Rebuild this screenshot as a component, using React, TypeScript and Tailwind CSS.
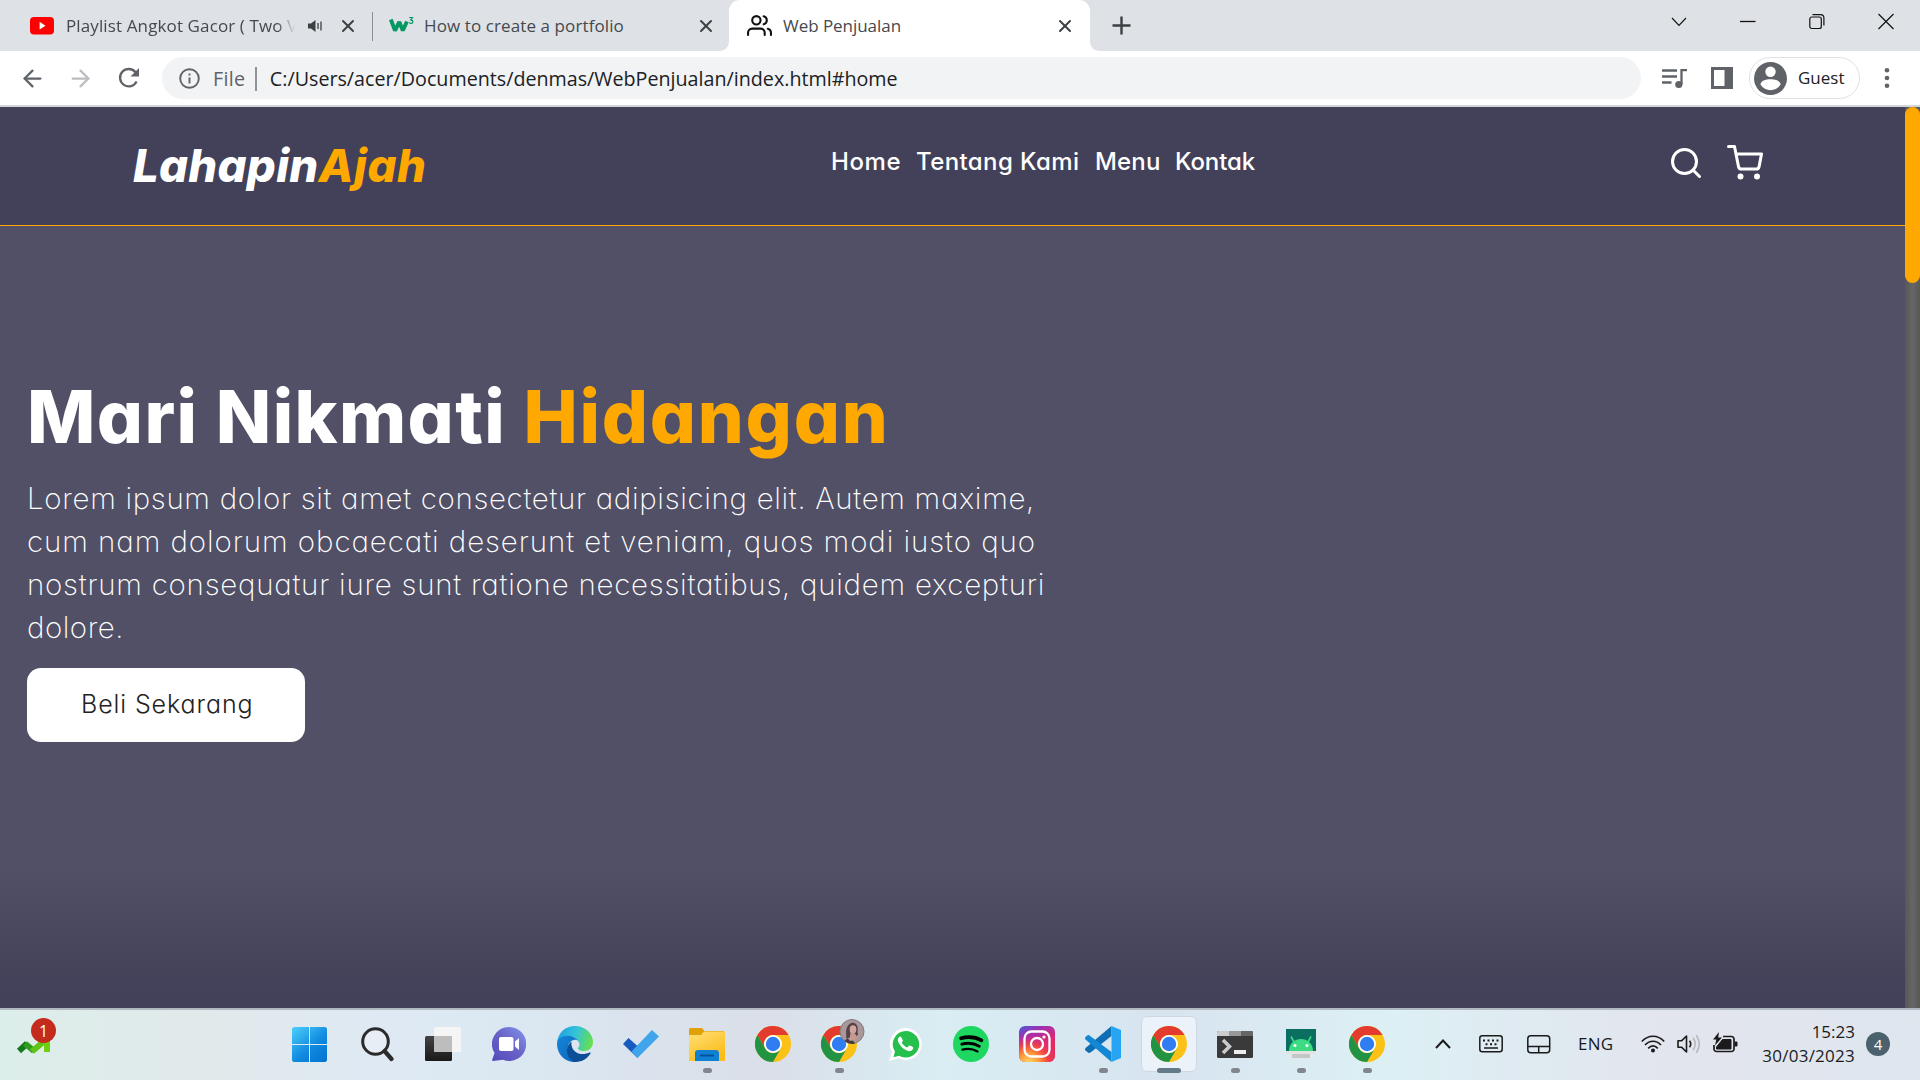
import type { ReactNode } from "react";
import { ArrowLeft, ArrowRight, X } from "lucide-react";

function YouTube() {
  return (
    <svg width="24" height="18" viewBox="0 0 24 18">
      <rect y="0" width="24" height="17.500" rx="4" fill="#f00" />
      <path d="M9.600 4.800 15.500 8.700l-5.900 3.700z" fill="#fff" />
    </svg>
  );
}

function Speaker() {
  return (
    <svg width="16" height="14" viewBox="0 0 16 14" fill="none" stroke="#3c4043" strokeWidth="1.300">
      <path d="M0 4.500h3L7.500 1v12L3 9.500H0z" fill="#3c4043" stroke="none" />
      <path d="M10 4v6M13 2.500v9" />
    </svg>
  );
}

function W3Logo() {
  return (
    <svg width="25" height="20" viewBox="0 0 25 20" fill="none" stroke="#059862">
      <path d="m1.800 3.500 4.200 11L10.300 6l3.500 8.500 4.200-9" strokeWidth="3.900" strokeLinejoin="bevel" />
      <path d="M20.200 1.500h3.300l-1.800 2.400c3 .1 2.600 3.800 0 3.500-.8-.1-1.200-.5-1.300-1.100" strokeWidth="1.200" />
    </svg>
  );
}

function Users() {
  return (
    <svg width="25" height="25" viewBox="0 0 24 24" fill="none" stroke="#111" strokeWidth="2" strokeLinecap="round" strokeLinejoin="round">
      <path d="M17 21v-2a4 4 0 0 0-4-4H5a4 4 0 0 0-4 4v2" />
      <circle cx="9" cy="7" r="4" />
      <path d="M23 21v-2a4 4 0 0 0-3-3.870M16 3.130a4 4 0 0 1 0 7.750" />
    </svg>
  );
}

function TabStrip() {
  return (
    <div className="flex h-[51px] shrink-0 bg-[#dee1e6] text-[17px] text-[#45494d]">
      <div className="flex w-[372px] items-center pl-[30px]">
        <YouTube />
        <div className="ml-[12px] w-[229px] overflow-hidden whitespace-nowrap [mask-image:linear-gradient(to_right,black_92%,transparent)]">
          <span className="tracking-[0.12px]">Playlist Angkot Gacor ( Two</span> V
        </div>
        <div className="ml-[13px]"><Speaker /></div>
        <X size={20} strokeWidth={2.4} className="ml-[14px] text-[#3c4043]" />
      </div>
      <div className="mt-[12px] h-[29px] w-px bg-[#8d9196]" />
      <div className="flex w-[347px] items-center pl-[16px]">
        <W3Logo />
        <span className="ml-[10px] tracking-[0.1px] whitespace-nowrap">How to create a portfolio</span>
        <X size={20} strokeWidth={2.4} className="ml-auto mr-[4px] text-[#3c4043]" />
      </div>
      <div className="flex w-[9px] items-end bg-white"><div className="size-full rounded-br-[9px] bg-[#dee1e6]" /></div>
      <div className="flex w-[361px] items-center rounded-t-[11px] bg-white pl-[18px] pr-[15px]">
        <Users />
        <span className="ml-[11px] tracking-[-0.04px]">Web Penjualan</span>
        <X size={20} strokeWidth={2.4} className="ml-auto text-[#3c4043]" />
      </div>
      <div className="w-[9px] bg-white"><div className="size-full rounded-bl-[9px] bg-[#dee1e6]" /></div>
      <svg className="ml-[13px] mt-[16px]" width="19" height="19" viewBox="0 0 19 19" stroke="#3c4043" strokeWidth="2.400">
        <path d="M9.500.5v18M.5 9.500h18" />
      </svg>
      <div className="ml-auto mr-[26px] mt-[13px] flex h-4 gap-[53px]">
        <svg width="16" height="16" fill="none" stroke="#111" strokeWidth="1.100"><path d="m1 5 7 7.500L15 5" /></svg>
        <svg width="16" height="16" stroke="#111" strokeWidth="1.300"><path d="M0 8.500h15.500" /></svg>
        <svg width="16" height="17" fill="none" stroke="#111" strokeWidth="1.200">
          <rect x=".8" y="4" width="11.500" height="11.500" rx="2" />
          <path d="M3.500 1.600h8a3.400 3.400 0 0 1 3.400 3.400v7.500" />
        </svg>
        <svg width="16" height="17" stroke="#111" strokeWidth="1.200"><path d="m.5 1 15 15m0-15-15 15" /></svg>
      </div>
    </div>
  );
}

function Toolbar() {
  return (
    <div className="flex h-[56px] shrink-0 items-center border-b-2 border-[#d3d5d8] bg-white pl-[19px]">
      <ArrowLeft size={27} strokeWidth={2} className="text-[#5f6368]" />
      <ArrowRight size={27} strokeWidth={2} className="ml-[21px] text-[#bbbdc0]" />
      <svg className="ml-[24px]" width="22" height="22" viewBox="0 0 22 22" fill="none" stroke="#5f6368" strokeWidth="2.300">
        <path d="M18.600 14.500A8.700 8.700 0 1 1 17.500 5.200" />
        <path d="M21 1v8.500h-8.500z" fill="#5f6368" stroke="none" />
      </svg>
      <div className="ml-[22px] flex h-[42px] w-[1479px] items-center rounded-full bg-[#f1f3f4] pl-[17px] pt-px text-[19.7px]">
        <svg className="-mt-px" width="21" height="21" viewBox="0 0 21 21" fill="none" stroke="#5f6368" strokeWidth="1.900">
          <circle cx="10.500" cy="10.500" r="9.300" />
          <path d="M10.500 9.500v6M10.500 5.400v2" />
        </svg>
        <span className="ml-[13px] tracking-[0.3px] text-[#5f6368]">File</span>
        <div className="ml-[10px] h-[24px] w-[1.500px] bg-[#8f9396]" />
        <span className="ml-[13px] text-[#202124]">C:/Users/acer/Documents/denmas/WebPenjualan/index.html#home</span>
      </div>
      <svg className="ml-[21px]" width="25" height="21" viewBox="0 0 25 21" fill="none" stroke="#5f6368" strokeWidth="2.300">
        <path d="M0 2.500h15M0 8.500h15M0 14.500h9.500M19.500 16.500V2.200H25" />
        <circle cx="16.800" cy="16.500" r="3.600" fill="#5f6368" stroke="none" />
      </svg>
      <svg className="ml-[24px]" width="23" height="22">
        <path fillRule="evenodd" d="M0 0h22v22H0zM3 3v16h10.500V3z" fill="#5f6368" />
      </svg>
      <div className="ml-[15px] flex h-[42px] w-[111px] items-center rounded-full border-[1.500px] border-[#dfe1e4] pl-[4px] text-[17px] text-[#202124]">
        <svg width="33" height="33" viewBox="0 0 33 33">
          <circle cx="16.500" cy="16.500" r="16.500" fill="#5f6368" />
          <circle cx="16.500" cy="9.800" r="5.200" fill="#fff" />
          <path d="M6.500 22.500c0-7 20-7 20 0-4.500 7.500-15.500 7.500-20 0z" fill="#fff" />
        </svg>
        <span className="ml-[11px]">Guest</span>
      </div>
      <svg className="ml-[24px]" width="6" height="20" fill="#5f6368">
        <circle cx="3" cy="2.300" r="2.300" /><circle cx="3" cy="10" r="2.300" /><circle cx="3" cy="17.700" r="2.300" />
      </svg>
    </div>
  );
}

function Page() {
  return (
    <div className="flex min-h-0 flex-1 font-['Inter',sans-serif] [font-feature-settings:'cv11']">
      <div className="flex w-[1905px] flex-col bg-[#525066]">
        <nav className="flex h-[119px] items-start border-b border-[#ffa800] bg-[#434159] text-white">
          <a className="ml-[133px] mt-[32px] w-[698px] text-[45.5px] leading-[53px] font-extrabold italic whitespace-nowrap">
            <span className="tracking-[0.3px]">Lahapin</span><span className="tracking-[0.5px] text-[#ffa800]">Ajah</span>
          </a>
          <div className="mt-[37px] flex h-[36px] w-[837px] text-[24px] leading-[36px] font-medium">
            <span className="w-[85px] tracking-[0.6px]">Home</span>
            <span className="w-[179px] tracking-[0.4px]">Tentang Kami</span>
            <span className="w-[80px] tracking-[0.15px]">Menu</span>
            <span className="tracking-[-0.1px]">Kontak</span>
          </div>
          <svg className="mt-[38px]" width="36" height="36" viewBox="0 0 24 24" fill="none" stroke="#fff" strokeWidth="2" strokeLinecap="round">
            <circle cx="11" cy="11" r="8" /><path d="m21 21-4.350-4.350" />
          </svg>
          <svg className="ml-[23px] mt-[38px]" width="36" height="36" viewBox="0 0 24 24" fill="none" stroke="#fff" strokeWidth="2" strokeLinecap="round" strokeLinejoin="round">
            <circle cx="9" cy="21" r="1" /><circle cx="20" cy="21" r="1" />
            <path d="M1 1h4l2.680 13.390a2 2 0 0 0 2 1.610h9.720a2 2 0 0 0 2-1.610L23 6H6" />
          </svg>
        </nav>
        <section className="flex-1 bg-linear-to-b from-[#525066] from-82% to-[#434159] to-98% pl-[27px] pt-[137px] text-white">
          <h1 className="text-[72.5px] leading-[107px] font-extrabold whitespace-nowrap">
            <span className="tracking-[1.4px]">Mari Nikmati </span><span className="tracking-[1.75px] text-[#ffa800]">Hidangan</span>
          </h1>
          <div className="mt-[7px] text-[29.5px] leading-[43px] font-extralight whitespace-nowrap">
            <p className="tracking-[0.664px]">Lorem ipsum dolor sit amet consectetur adipisicing elit. Autem maxime,</p>
            <p className="tracking-[0.922px]">cum nam dolorum obcaecati deserunt et veniam, quos modi iusto quo</p>
            <p className="tracking-[0.743px]">nostrum consequatur iure sunt ratione necessitatibus, quidem excepturi</p>
            <p className="tracking-[0.5px]">dolore.</p>
          </div>
          <button className="mt-[19px] flex h-[74px] w-[278px] items-center rounded-[14px] bg-white pl-[54px] text-[25px] font-light text-[#222]">
            <span className="tracking-[0.9px]">Beli Sekarang</span>
          </button>
        </section>
      </div>
      <div className="w-[15px] bg-linear-to-r from-[#585858] via-[#666] to-[#585858]">
        <div className="h-[176px] rounded-full bg-[#ffa800]" />
      </div>
    </div>
  );
}

function Chrome() {
  return (
    <svg width="36" height="36" viewBox="0 0 36 36">
      <circle cx="18" cy="18" r="18" fill="#fbc116" />
      <path d="M2.400 9A18 18 0 0 1 33.600 9H18a9 9 0 0 0-7.800 13.500z" fill="#e33b2e" />
      <path d="M2.400 9A18 18 0 0 0 18 36l7.800-13.500A9 9 0 0 1 10.200 22.500z" fill="#229342" />
      <circle cx="18" cy="18" r="9" fill="#fff" />
      <circle cx="18" cy="18" r="7.200" fill="#2f7df0" />
    </svg>
  );
}

function Slot({ children, mark }: { children: ReactNode; mark?: boolean }) {
  return (
    <div className="relative flex h-[70px] w-[66px] items-center justify-center pb-[2px]">
      {children}
      {mark && <div className="absolute bottom-[7px] h-[5px] w-[9px] rounded-full bg-[#80868b]" />}
    </div>
  );
}

function Taskbar() {
  return (
    <div className="flex h-[72px] shrink-0 border-t-2 border-[#b0b9bf] bg-[linear-gradient(90deg,#dceeea_0px,#e1e9ea_200px,#dfe9f3_370px,#dbe8f2_500px,#dadfe9_770px,#d9edf3_940px,#d8e4f0_1170px,#dcf0f4_1380px,#e3e5ee_1670px,#dee6ee_1920px)]">
      <div className="relative w-[278px]">
        <svg className="absolute left-[16px] top-[26px]" width="36" height="20" viewBox="0 0 36 20" fill="none">
          <path d="m3 15 8-7.500" stroke="#127a1c" strokeWidth="6" />
          <path d="m9 7.500 9 7.500" stroke="#2f9e1e" strokeWidth="6" />
          <path d="m16 15.500 14-12" stroke="#62c415" strokeWidth="6" />
          <path d="M22 1h12v15h-6V9z" fill="#6ccf10" />
        </svg>
        <div className="absolute left-[31px] top-[8px] flex size-[25px] items-center justify-center rounded-full bg-[#c42b1c] text-[16px] text-white">1</div>
      </div>
      <Slot>
        <svg className="-ml-[3px]" width="35" height="35" viewBox="0 0 35 35">
          <defs><linearGradient id="win" gradientUnits="userSpaceOnUse" x1="0" y1="0" x2="30" y2="35"><stop stopColor="#4cd0fb" /><stop offset=".6" stopColor="#118ae0" /><stop offset="1" stopColor="#0476d2" /></linearGradient></defs>
          <path d="M1.500 0H17v17H0V1.500zM18 0h15.500L35 1.500V17H18zM0 18h17v17H1.500L0 33.500zM18 18h17v15.500L33.500 35H18z" fill="url(#win)" />
        </svg>
      </Slot>
      <Slot>
        <svg width="33" height="35" viewBox="0 0 33 35" fill="none" stroke="#2b2b2b">
          <circle cx="14.500" cy="14.500" r="12.800" strokeWidth="3" fill="#eef2f8" fillOpacity=".6" />
          <path d="m23.500 24 7 8" strokeWidth="4.200" strokeLinecap="round" />
        </svg>
      </Slot>
      <Slot>
        <svg width="36" height="35" viewBox="0 0 36 35">
          <defs><linearGradient id="tv" x2="0" y2="1"><stop stopColor="#444" /><stop offset="1" stopColor="#191919" /></linearGradient></defs>
          <rect y="9" width="27" height="25" rx="1.500" fill="url(#tv)" />
          <rect x="9" y="0" width="27" height="25" rx="1.500" fill="#f5f5f5" />
          <path d="M9 9h18v16H10.500L9 23.500z" fill="#bdbdbd" />
        </svg>
      </Slot>
      <Slot>
        <svg width="34" height="34" viewBox="0 0 34 34">
          <defs><linearGradient id="chat" x1="1" y1="0" x2="0" y2="1"><stop stopColor="#8397ec" /><stop offset=".5" stopColor="#6a62c8" /><stop offset="1" stopColor="#5249b8" /></linearGradient></defs>
          <path d="M17 0a17 17 0 1 1-6 32.800L1 34c-1 0-1-1-.7-1.700L2.600 26A17 17 0 0 1 17 0z" fill="url(#chat)" />
          <rect x="7" y="10" width="14.500" height="14" rx="2" fill="#fff" />
          <path d="m23 14.500 4-3.500v12l-4-3.500z" fill="#fff" />
        </svg>
      </Slot>
      <Slot>
        <svg width="36" height="36" viewBox="0 0 36 36">
          <defs>
            <linearGradient id="ea" x1="0" y1=".3" x2="1" y2=".5"><stop stopColor="#1f9fe0" /><stop offset=".5" stopColor="#35c3d9" /><stop offset="1" stopColor="#66e04c" /></linearGradient>
            <linearGradient id="eb" x2="1" y2="1"><stop stopColor="#1487dd" /><stop offset="1" stopColor="#0e63b5" /></linearGradient>
          </defs>
          <path d="M0 17C1 6.500 8.500 0 18 0c11 0 18 8 18 16 0 6-4.500 9-9 9-4 0-6.500-1.500-6-3 2.500-2.500 1.500-6-.5-7.500C15 9 4 9.500 0 17z" fill="url(#ea)" />
          <path d="M0 18C0 8.500 15 7 21 14.500c-4-2-9 1-10 5.500-1.500 7 3.500 13 8 16C8 37 0 28 0 18z" fill="url(#eb)" />
          <path d="M14.500 15.500C8 20 8 31 17.500 35.900 24 36.500 30 33 33.500 27.500c.5-1-.3-1.300-1-.9C23 31 13 25 14.500 15.500z" fill="#0c4f96" />
        </svg>
      </Slot>
      <Slot>
        <svg width="36" height="28" viewBox="0 0 36 28">
          <path d="m0 14 5.500-6L19 20l-4.500 8z" fill="#185abd" />
          <path d="M29 0 36 6.500 14.500 28 8.500 21.500z" fill="#41a5ee" />
        </svg>
      </Slot>
      <Slot mark>
        <svg width="36" height="33" viewBox="0 0 36 33">
          <defs><linearGradient id="fo" x2=".6" y2="1"><stop stopColor="#ffe07a" /><stop offset="1" stopColor="#fcbc18" /></linearGradient></defs>
          <path d="M0 1.500Q0 0 1.500 0H13l2.500 3H35v4H0z" fill="#e0a008" />
          <path d="M0 7h12l3-3.500h21V33H0z" fill="url(#fo)" />
          <path d="M6 33v-8q0-3 3-3h18q3 0 3 3v8z" fill="#1080d2" />
          <path d="M11 27.500h14" stroke="#07519a" strokeWidth="2" />
        </svg>
      </Slot>
      <Slot><Chrome /></Slot>
      <Slot mark>
        <Chrome />
        <svg className="absolute right-[7px] top-[9px]" width="26" height="26" viewBox="0 0 26 26">
          <circle cx="13" cy="12.500" r="12" fill="#a9979a" stroke="#85797e" />
          <path d="M7 19C8 15 6 13 8 8.500 10 2.500 17 2 18.500 7.500c.7 3-.5 5 .5 8l-3 3z" fill="#54424a" />
          <ellipse cx="14" cy="10.500" rx="3.300" ry="4.200" fill="#d2a49b" />
          <path d="m11.500 14 4.500.5 2.500 4.500-5 3-3-1.500z" fill="#c59b90" />
          <path d="m5.500 22 3-3 2.500 3 3-.5 2 3.200q-6 1.300-10.500-2.700z" fill="#4a3a44" />
        </svg>
      </Slot>
      <Slot>
        <svg width="33" height="33" viewBox="0 0 33 33">
          <path d="M17 0a16 16 0 1 1-7.500 30.300L0 33l3-9A16 16 0 0 1 17 0z" fill="#fff" />
          <path d="M17 3a13.300 13.300 0 1 1-6.800 24.800L4.500 29.300 6 23.600A13.300 13.300 0 0 1 17 3z" fill="#25bf4b" />
          <path d="M12.300 9.300c-.6-1.300-1.500-1-2.400-.1-1.500 1.700-1.200 4 0 6.100 2.300 4 5.300 6.500 9.200 7.700 2.500.7 5-.8 5.200-3.200 0-.7-3.400-2.400-4-2.200-.8.200-1.300 1.900-2.100 1.800-2-.5-4.700-3-5.300-4.700-.1-.6 1.200-1.400 1.100-2.100z" fill="#fff" />
        </svg>
      </Slot>
      <Slot>
        <svg width="36" height="36" viewBox="0 0 36 36" fill="none" stroke="#000" strokeLinecap="round">
          <circle cx="18" cy="18" r="18" fill="#1ed760" stroke="none" />
          <path d="M8 12.300c7-2 14.500-1.300 20.500 2" strokeWidth="3.600" />
          <path d="M8.800 18.200c6-1.700 12.300-1 17.500 2" strokeWidth="2.900" />
          <path d="M9.500 23.700c5-1.300 10.500-.8 15 1.700" strokeWidth="2.300" />
        </svg>
      </Slot>
      <Slot>
        <svg width="36" height="36" viewBox="0 0 36 36" fill="none" stroke="#fff">
          <defs>
            <linearGradient id="ia" x1="0" y1="0" x2=".6" y2="1"><stop stopColor="#4a5bd8" /><stop offset=".3" stopColor="#a030b0" /><stop offset=".7" stopColor="#e0286e" /><stop offset="1" stopColor="#e83050" /></linearGradient>
            <radialGradient id="ib" cx=".27" cy="1.050" r=".85"><stop stopColor="#ffdc6e" /><stop offset=".35" stopColor="#fd9a3a" /><stop offset=".65" stopColor="#f5453c" stopOpacity=".8" /><stop offset="1" stopColor="#d6249f" stopOpacity="0" /></radialGradient>
          </defs>
          <rect width="36" height="36" rx="6" fill="url(#ia)" stroke="none" />
          <rect width="36" height="36" rx="6" fill="url(#ib)" stroke="none" />
          <rect x="5.500" y="5.500" width="25" height="25" rx="7" strokeWidth="2.300" />
          <circle cx="18" cy="18" r="6" strokeWidth="2.300" />
          <circle cx="25" cy="11" r="1.600" fill="#fff" stroke="none" />
        </svg>
      </Slot>
      <Slot mark>
        <svg width="36" height="36" viewBox="0 0 36 36">
          <path d="M26.500 0v10L5.500 26.500 3.500 27 .5 24.500q-1-1.200 0-2.500z" fill="#0f6fb5" />
          <path d="m3.800 9 22.700 17v10L.5 13.500q-1-1.200 0-2.500l2-1.800z" fill="#1287d3" />
          <path d="M26.500 0 36 4v28l-9.500 4z" fill="#27a5f2" />
        </svg>
      </Slot>
      <div className="relative flex h-[70px] w-[66px] items-center justify-center pb-[2px]">
        <div className="flex size-[56px] items-center justify-center rounded-[6px] border border-[#cfd8e2] bg-[#ecf2f9]"><Chrome /></div>
        <div className="absolute bottom-[7px] h-[5px] w-[24px] rounded-full bg-[#627a8a]" />
      </div>
      <Slot mark>
        <svg width="36" height="27" viewBox="0 0 36 27">
          <rect width="36" height="27" rx="1.500" fill="#3a3a3a" />
          <path d="M0 5V1.500Q0 0 1.500 0H12v5z" fill="#ccc" /><path d="M12 0h12v5H12z" fill="#999" /><path d="M24 0h10.500Q36 0 36 1.500V5H24z" fill="#666" />
          <path d="m6 9 6.500 6.500L6 22" fill="none" stroke="#ccc" strokeWidth="3.500" />
          <rect x="17" y="19" width="12" height="4" fill="#eee" />
        </svg>
      </Slot>
      <Slot mark>
        <svg width="30" height="30" viewBox="0 0 30 30">
          <path d="M0 0h30v22H0z" fill="#0a6e60" />
          <path d="M3 22c0-16 24-16 24 0z" fill="#3ddc84" />
          <path d="m8 13-3-5.500M22 13l3-5.500" stroke="#3ddc84" strokeWidth="1.600" />
          <circle cx="9" cy="16.500" r="1.500" fill="#fff" /><circle cx="21" cy="16.500" r="1.500" fill="#fff" />
          <path d="M0 22h30v3H0z" fill="#e3e3e3" /><path d="M6 25h18v4H6z" fill="#c6c6c6" />
        </svg>
      </Slot>
      <Slot mark><Chrome /></Slot>

      <div className="ml-[35px] flex h-[68px] items-center text-[17px] text-[#1b1b1b]">
        <svg width="16" height="10" fill="none" stroke="#1b1b1b" strokeWidth="2"><path d="m1 9 7-7.500L15 9" /></svg>
        <svg className="ml-[28px]" width="24" height="18" viewBox="0 0 24 18" fill="none" stroke="#1b1b1b" strokeWidth="1.500">
          <rect x=".8" y=".8" width="22.400" height="15.900" rx="2.500" />
          <path d="M4 5.500h16" strokeDasharray="2 2.500" strokeWidth="2" /><path d="M6.500 9.300h11" strokeDasharray="2 2.500" strokeWidth="2" /><path d="M5 13h14" />
        </svg>
        <svg className="ml-[24px]" width="24" height="19" viewBox="0 0 24 19" fill="none" stroke="#1b1b1b" strokeWidth="1.500">
          <rect x=".8" y=".8" width="21.900" height="17" rx="3" /><path d="M1 11.500h22M11.700 11.500V18" />
        </svg>
        <span className="ml-[27px] w-[36px] tracking-[0.2px]">ENG</span>
        <svg className="ml-[27px]" width="24" height="18" viewBox="0 0 24 18" fill="none" stroke="#1b1b1b" strokeWidth="1.700">
          <path d="M.8 6.500c6.500-7 16-7 22.400 0M4 10c4.800-5 11.200-5 16 0M7.200 13.300c3-3 6.600-3 9.600 0" /><circle cx="12" cy="15.500" r="2" fill="#1b1b1b" stroke="none" />
        </svg>
        <svg className="ml-[12px]" width="24" height="20" viewBox="0 0 24 20" fill="none" stroke="#1b1b1b" strokeWidth="1.600">
          <path d="M1 6.800h3.500L9.500 2v16l-5-4.800H1z" strokeLinejoin="round" />
          <path d="M12.500 6.800q2.500 3.200 0 6.400" /><path d="M16 3.800q4.500 6.200 0 12.400M19.300 1.200q6 8.800 0 17.600" stroke="#b4b9c0" />
        </svg>
        <svg className="ml-[12px] -mt-[3px]" width="25" height="21" viewBox="0 0 25 21">
          <path d="M10 4.500h8.500a2.500 2.500 0 0 1 2.500 2.500v10a2.500 2.500 0 0 1-2.500 2.500H3.500A2.500 2.500 0 0 1 1 17v-4" fill="none" stroke="#1b1b1b" strokeWidth="1.700" />
          <path d="M9.500 7.500H18v9.500H3.500v-2z" fill="#1b1b1b" stroke="#1b1b1b" strokeLinejoin="round" /><rect x="21.500" y="9.500" width="3" height="5" rx="1" fill="#1b1b1b" />
          <path d="M6 0 0 7.500h3.300L2 13.500 9 5.500H5.200z" fill="#1b1b1b" />
        </svg>
        <div className="ml-[24px] flex w-[93px] flex-col items-end leading-[24px]">
          <span>15:23</span>
          <span className="tracking-[0.25px]">30/03/2023</span>
        </div>
        <div className="ml-[11px] flex size-[24px] items-center justify-center rounded-full bg-[#4c616e] text-[15px] text-white">4</div>
      </div>
    </div>
  );
}

export default function App() {
  return (
    <div className="flex h-[1080px] w-[1920px] flex-col overflow-hidden bg-white font-['Open_Sans',sans-serif]">
      <TabStrip />
      <Toolbar />
      <Page />
      <Taskbar />
    </div>
  );
}
